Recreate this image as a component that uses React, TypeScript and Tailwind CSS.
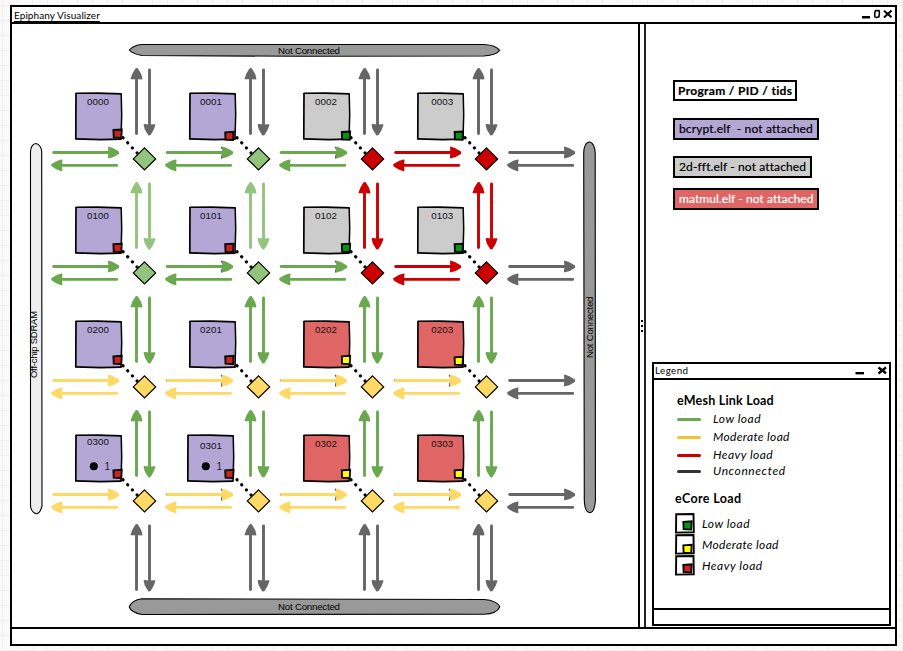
import React from "react";

const GREEN = "#6aa84f";
const LIGHT = "#93c47d";
const RED = "#cc0000";
const YELLOW = "#ffd966";
const GRAY = "#666666";
const PURPLE = "#b4a7d6";
const SILVER = "#cccccc";
const CORAL = "#e06666";

const H_LINKS = [
  [GREEN, GREEN, GREEN, RED, GRAY],
  [GREEN, GREEN, GREEN, RED, GRAY],
  [YELLOW, YELLOW, YELLOW, YELLOW, GRAY],
  [YELLOW, YELLOW, YELLOW, YELLOW, GRAY],
];
const V_LINKS = [
  [GRAY, GRAY, GRAY, GRAY],
  [LIGHT, LIGHT, RED, RED],
  [GREEN, GREEN, GREEN, GREEN],
  [GREEN, GREEN, GREEN, GREEN],
  [GRAY, GRAY, GRAY, GRAY],
];
const ROUTERS = [
  [LIGHT, LIGHT, RED, RED],
  [LIGHT, LIGHT, RED, RED],
  [YELLOW, YELLOW, YELLOW, YELLOW],
  [YELLOW, YELLOW, YELLOW, YELLOW],
];
const CORES = [
  [PURPLE, PURPLE, SILVER, SILVER],
  [PURPLE, PURPLE, SILVER, SILVER],
  [PURPLE, PURPLE, CORAL, CORAL],
  [PURPLE, PURPLE, CORAL, CORAL],
];
const LOAD: Record<string, string> = { [PURPLE]: "#cc2222", [SILVER]: "#0a9212", [CORAL]: "#ffff00" };
const LOAD_X = [38.8, 36.6, 39.2, 38];
const LOAD_Y = [
  [37, 39.3, 39, 39],
  [37.2, 37.2, 37.2, 37.2],
  [35.3, 35.3, 35.3, 36.3],
  [35.3, 35.3, 35.3, 35.3],
];
const LABEL_X = [12.3, 11.3, 12.3, 14.6];

/* Arrow along +x from 0 to 68, with a slightly uneven hand-drawn head. */
function Arrow({ t, c, under }: { t: string; c: string; under?: boolean }) {
  return (
    <g transform={t} fill={c} stroke={c} strokeLinejoin="round" strokeLinecap="round">
      {under && (
        <path d="M.9 0H2M55.9 -5L57 -3.5M56.6 2.5L56 5.2" stroke="#666" strokeWidth="2" />
      )}
      <path d="M1.9 0H60" strokeWidth="2.9" />
      <path d="M57 -5.1L57.4 0L56.9 5.1L61 4L66.6 .7L66.4 -.5L61.5 -3.4Z" strokeWidth="1.6" />
    </g>
  );
}

function Load({ x, y, c }: { x: number; y: number; c: string }) {
  return (
    <path
      d={`M${x} ${y + 0.3}L${x + 8.4} ${y - 0.2}L${x + 7.9} ${y + 8.1}L${x + 0.3} ${y + 7.7}Z`}
      fill={c}
      stroke="#000"
      strokeWidth="1.8"
    />
  );
}

function Core({ r, k }: { r: number; k: number }) {
  const shift = r === 3 && k === 1 ? -2 : 0;
  const c = CORES[r][k];
  const ly = r === 3 && k === 0 ? 9.9 : r === 3 && k === 1 ? 13.9 : 12.2;
  return (
    <g transform={`translate(${74.6 + 114 * k} ${92.7 + 114 * r})`}>
      <g transform={`translate(${shift} 0)`}>
        <path d="M1.2 .5L46.6 1L47 24L46.4 46.3L24 46.8L1 46L1 24Z" fill={c} />
        <path d="M1 .5L23 .4L47 1.2" fill="none" stroke="#000" strokeWidth="1.6" />
        <path d="M46.6 .8L47.1 22L46.4 46.6" fill="none" stroke="#000" strokeWidth="1.5" />
        <path d="M47 46.4L26 47L.6 46.2" fill="none" stroke="#000" strokeWidth="1.7" />
        <path d="M1.4 .2L1.3 20L1.2 46.6" fill="none" stroke="#000" strokeWidth="1.7" />
        {r === 3 && k < 2 && (
          <>
            <circle cx="19.2" cy="31.6" r="4" />
            <text x="30" y="35.3" fontSize="10" fill="#222">1</text>
          </>
        )}
      </g>
      <text x={LABEL_X[k]} y={ly} fontSize="9.8" fill="#111" textLength="22">{`0${r}0${k}`}</text>
      <path d="M48.4 45L62.9 60.7" stroke="#000" strokeWidth="3.2" strokeLinecap="round" strokeDasharray="0.1 6.8" />
      <Load x={LOAD_X[k]} y={LOAD_Y[r][k]} c={LOAD[c]} />
    </g>
  );
}

function Mesh() {
  return (
    <svg
      className="block shrink-0 [font-family:'Liberation_Sans',Arial,sans-serif]"
      width="626"
      height="604"
      viewBox="12 24 626 604"
    >
      <g stroke="#000" strokeWidth="1.1">
        <path d="M142 44.5H484C493 45 498 48 499.7 50.3C498 53 493 55.5 484 56L300 56.3L142 55.5C135 54.5 131 52 129.3 50C132 47 136 45 142 44.5Z" fill="#999" />
        <path d="M142 598.8L484 599.5C493 600 499 603.5 499.7 607C498 611 492 614 484 614.2L142 614.5C135 613.5 130 610 129.3 607C131 602.5 136 599.5 142 598.8Z" fill="#999" />
        <path d="M30.5 152C30.5 147 33 143.5 36 143.5C39 144 41.7 147.5 41.7 152L42 506C41 510 39 513.5 36.5 513.7C33.5 513 31 510 30.5 506Z" fill="#eee" />
        <path d="M583.7 154C583.5 147 586 142 589.3 142C592.7 142 595 147 595.2 153L595.4 500C595 507 593.2 512.5 590 512.7C586.5 512.5 584.5 507 584.3 500Z" fill="#999" />
      </g>
      <text x="278" y="53.7" fontSize="9.7" textLength="62">Not Connected</text>
      <text x="278" y="610" fontSize="9.7" textLength="62">Not Connected</text>
      <text transform="translate(593 358) rotate(-90)" fontSize="9.7" textLength="61.5">Not Connected</text>
      <text transform="translate(37 378) rotate(-90)" fontSize="9.4" textLength="67">Off-chip SDRAM</text>
      {H_LINKS.map((row, r) =>
        row.map((c, k) => (
          <g key={`h${r}${k}`}>
            <Arrow
              c={c}
              under={c !== RED && c !== GRAY && k > 0}
              t={`translate(${51.8 + 114 * k} ${152.5 + 114 * r})`}
            />
            <Arrow c={c} t={`translate(${118.6 + 114 * k} ${165.4 + 114 * r}) rotate(180)`} />
          </g>
        )),
      )}
      {V_LINKS.map((row, r) =>
        row.map((c, k) => (
          <g key={`v${r}${k}`}>
            <Arrow c={c} t={`translate(${136.5 + 114 * k} ${135.5 + 114 * r}) rotate(-90)`} />
            <Arrow c={c} t={`translate(${149.5 + 114 * k} ${68 + 114 * r}) rotate(90)`} />
          </g>
        )),
      )}
      {ROUTERS.map((row, r) =>
        row.map((c, k) => (
          <g key={`c${r}${k}`}>
            <Core r={r} k={k} />
            <path
              transform={`translate(${144.5 + 114 * k} ${158.9 + 114 * r})`}
              d="M0 -11L11.2 0L0 11L-11.2 0Z"
              fill={c}
              stroke="#000"
              strokeWidth="1.2"
            />
          </g>
        )),
      )}
    </svg>
  );
}

function LinkRow({ color, label, cls, text }: { color: string; label: string; cls: string; text: string }) {
  return (
    <div className={`flex items-center ${cls}`}>
      <span className={`h-[3px] w-6 rounded-full ${color}`} />
      <span className={`ml-3 italic ${text}`}>{label}</span>
    </div>
  );
}

function CoreRow({ color, label, text, dy }: { color: string; label: string; text: string; dy: number }) {
  return (
    <div className="flex h-[21px] items-center">
      <svg width="20" height="21" viewBox="0 0 20 21" className="shrink-0">
        <path d="M1.2 1.2L18.5 1L18.8 19.3L1 19.6Z" fill="#fff" stroke="#000" strokeWidth="1.9" />
        <Load x={8.3} y={dy} c={color} />
      </svg>
      <span className={`ml-[7px] italic ${text}`}>{label}</span>
    </div>
  );
}

export default function App() {
  return (
    <div className="h-[651px] w-[903px] overflow-hidden bg-[#fafafa] bg-[linear-gradient(to_right,#f0f0f0_1px,transparent_1px),linear-gradient(to_bottom,#f0f0f0_1px,transparent_1px)] bg-[size:15px_15px] bg-[position:2px_5px] pt-[5px] pl-[10px] text-black [font-family:Lato,'Open_Sans',sans-serif] [font-variant-ligatures:none]">
      <div className="flex h-[641px] w-[887px] flex-col border-2 border-black bg-white">
        <header className="box-border flex h-[17px] shrink-0 items-center border-b-2 border-black pr-[3px] pl-[2px]">
          <h1 className="text-[10px] leading-3 tracking-[0.07px] whitespace-nowrap underline underline-offset-2">Epiphany Visualizer</h1>
          <svg className="ml-auto" width="31" height="11" viewBox="861 9 31 11" fill="none" stroke="#000">
            <path d="M862 17.3L870 17.2" strokeWidth="2.4" />
            <path d="M875.5 10.6L879 10.5L879.4 12.5L879 16.8L876.5 17.6L874.8 16.8L874.7 13Z" strokeWidth="1.6" strokeLinejoin="round" />
            <path d="M884 10.8L891.5 17.2M891.5 10.5L884 17.5" strokeWidth="2" />
          </svg>
        </header>
        <main className="flex min-h-0 flex-1">
          <Mesh />
          <div className="flex h-[603px] w-2 shrink-0 flex-col items-center justify-center gap-[3px] border-r-2 border-l-2 border-r-[#222] border-l-black">
            <i className="h-[2px] w-[2px] bg-black" />
            <i className="h-[2px] w-[2px] bg-black" />
            <i className="h-[2px] w-[2px] bg-black" />
          </div>
          <aside className="flex flex-1 flex-col">
            <div className="flex flex-col items-start pt-[56px] pl-[27px] text-[12px] leading-none whitespace-pre [-webkit-text-stroke:0.2px]">
              <div className="flex h-[21px] w-[124px] items-center border-2 border-black pl-[3px] font-bold tracking-[0.32px]">Program / PID / tids</div>
              <div className="mt-[17px] flex h-[22px] w-[146px] items-center border-2 border-black bg-[#b4a7d6] pl-1 tracking-[0.14px]">{"bcrypt.elf  - not attached"}</div>
              <div className="mt-4 flex h-[22px] w-[139px] items-center border-2 border-black bg-[#cccccc] pl-1 tracking-[0.12px]">2d-fft.elf - not attached</div>
              <div className="mt-[10px] flex h-[22px] w-[146px] items-center border-2 border-black bg-[#e06666] pl-1 tracking-[0.07px] text-white">matmul.elf - not attached</div>
            </div>
            <section className="mt-[152px] ml-[6px] flex h-[264px] w-[239px] flex-col border-2 border-black bg-white">
              <div className="flex h-4 shrink-0 items-center border-b-2 border-black pr-[2px] pl-[1px]">
                <h2 className="text-[9.8px] leading-none tracking-[0.4px]">Legend</h2>
                <svg className="ml-auto" width="32" height="10" viewBox="855 366 32 10" fill="none" stroke="#000">
                  <path d="M855.5 373.2H864" strokeWidth="2.4" />
                  <path d="M878.5 367.5L886 373.3M886 367.3L878.5 373.5" strokeWidth="2.4" />
                </svg>
              </div>
              <div className="flex flex-1 flex-col pt-[14px] pl-[21px] text-[12px] leading-[14px] whitespace-nowrap">
                <h3 className="ml-[2px] text-[12.5px] font-bold tracking-[0.22px]">eMesh Link Load</h3>
                <LinkRow color="bg-[#6aa84f]" label="Low load" cls="mt-1 ml-[2px]" text="tracking-[0.5px]" />
                <LinkRow color="bg-[#f1c232]" label="Moderate load" cls="mt-1 ml-[2px]" text="tracking-[0.33px]" />
                <LinkRow color="bg-[#cc0000]" label="Heavy load" cls="mt-1 ml-[2px]" text="tracking-[0.45px]" />
                <LinkRow color="bg-[#333333]" label="Unconnected" cls="mt-[2px] ml-[2px]" text="tracking-[0.6px]" />
                <h3 className="mt-[14px] mb-[7px] text-[12.5px] font-bold tracking-[0.35px]">eCore Load</h3>
                <CoreRow color="#0a9212" label="Low load" text="tracking-[0.5px]" dy={8.5} />
                <CoreRow color="#ffff00" label="Moderate load" text="tracking-[0.33px]" dy={11} />
                <CoreRow color="#cc2222" label="Heavy load" text="tracking-[0.5px]" dy={9.5} />
              </div>
              <footer className="h-4 shrink-0 border-t-2 border-black" />
            </section>
          </aside>
        </main>
        <footer className="h-[17px] shrink-0 border-t-2 border-black" />
      </div>
    </div>
  );
}
